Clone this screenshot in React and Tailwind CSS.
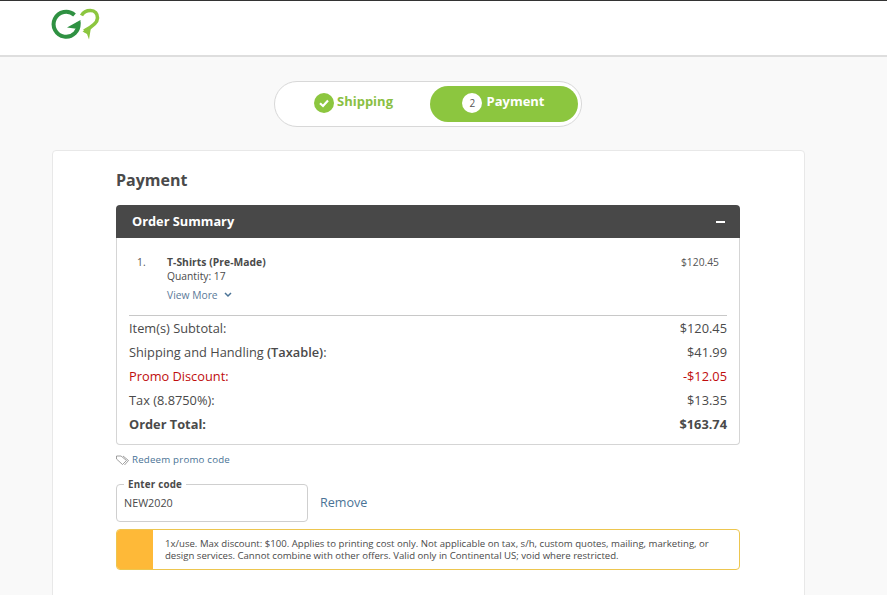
const Logo = () => (
  <svg width="50" height="34" viewBox="0 0 50 34" fill="none">
    <path d="M23.5 7 A12.5 12.5 0 1 0 27.5 14.5" stroke="#2f9142" strokeWidth="4" />
    <path d="M16 19.5 L29.5 12 L29.5 15 L27 21 Z" fill="#2f9142" />
    <path d="M30.5 7.5 C33 3 37 2.5 39.5 2.5 C44 2.5 46.5 6 46.5 10 C46.5 15 41 19 33 23" stroke="#8cc63f" strokeWidth="3.6" />
    <path d="M31.5 23.5 L40 19.5 L38 31.5 L36 26 Z" fill="#8cc63f" />
  </svg>
);

const Row = ({ label, value, className = '' }) => (
  <div className={`flex justify-between h-6 items-center ${className}`}>
    <span>{label}</span>
    <span>{value}</span>
  </div>
);

const App = () => {
  return (
    <div className="h-[595px] overflow-hidden bg-[#f9f9f9] font-['Open_Sans',sans-serif] text-[#4a4a4a]">
      <header className="h-[57px] bg-white border-t border-t-[#333] border-b-2 border-b-[#dedede] pl-[51px] pt-[7px]">
        <Logo />
      </header>

      <div className="pt-6 pl-[274px]">
        <div className="w-[308px] h-[46px] rounded-full bg-white border border-[#d8d8d8] flex items-center pl-[4px] pr-[3px]">
          <div className="w-[151px] flex items-center justify-center gap-[3px] pr-[2px] text-[13px] font-bold text-[#8ac044]">
            <span className="w-5 h-5 mt-[-2px] rounded-full bg-[#8cc63f] flex items-center justify-center">
              <svg width="12" height="12" viewBox="0 0 12 12" fill="none">
                <path d="M2 6.2 L5 9 L10 3.5" stroke="white" strokeWidth="2.2" />
              </svg>
            </span>
            <span className="mt-[-5px]">Shipping</span>
          </div>
          <div className="w-[148px] h-9 rounded-full bg-[#8cc63f] flex items-center justify-center gap-[4px] pr-[1px] text-[13px] font-bold text-white">
            <span className="w-5 h-5 mt-[-2px] rounded-full bg-white flex items-center justify-center text-[10px] font-normal text-[#555]">2</span>
            <span className="mt-[-5px]">Payment</span>
          </div>
        </div>
      </div>

      <main className="mt-[23px] ml-[52px] w-[753px] h-[500px] bg-white border border-[#e8e8e8] rounded-[4px] pl-[63px] pr-[64px] pt-[18px]">
        <h1 className="text-[16px] leading-[22px] font-bold">Payment</h1>

        <div className="mt-[14px] h-[33px] rounded-t-[4px] bg-[#484848] text-white flex items-center justify-between pl-4 pr-[15px]">
          <span className="text-[12.8px] font-bold">Order Summary</span>
          <span className="w-[9px] h-[2px] bg-white" />
        </div>
        <div className="h-[207px] bg-white border border-t-0 border-[#d5d5d5] rounded-b-[4px] px-3">
          <div className="flex h-[77px] pt-[17px] text-[10.3px] leading-[14px] pl-2 pr-[8px]">
            <span className="w-[30px] text-[#555]">1.</span>
            <div className="flex-1">
              <div className="font-bold tracking-[0.05px]">T-Shirts (Pre-Made)</div>
              <div>Quantity: 17</div>
              <div className="mt-[5px] flex items-center gap-[6px] text-[#5b7a99]">
                View More
                <svg width="8" height="6" viewBox="0 0 8 6" fill="none">
                  <path d="M1 1 L4 4 L7 1" stroke="#4a7396" strokeWidth="1.5" />
                </svg>
              </div>
            </div>
            <span className="text-[#555]">$120.45</span>
          </div>
          <div className="border-t border-[#c8c8c8] pt-[1px] text-[12.8px]">
            <Row label="Item(s) Subtotal:" value="$120.45" />
            <Row label={<>Shipping and Handling <b className="font-semibold">(Taxable)</b>:</>} value="$41.99" />
            <Row label="Promo Discount:" value="-$12.05" className="text-[#c00d0d]" />
            <Row label="Tax (8.8750%):" value="$13.35" />
            <Row label="Order Total:" value="$163.74" className="font-bold" />
          </div>
        </div>

        <div className="mt-2 flex items-center gap-[3px] text-[9.7px] text-[#4a7396] tracking-[0.2px]">
          <svg width="13" height="11" viewBox="0 0 13 11" fill="none" stroke="#888" strokeWidth="0.8">
            <path d="M0.5 1 H5 L10.5 5.5 L6.5 9.5 L0.5 4 Z" />
            <path d="M7 1 L12.5 5.5 L8.5 10" />
          </svg>
          Redeem promo code
        </div>

        <div className="mt-3 flex items-center">
          <fieldset className="w-[192px] h-[42px] border border-[#cfcfcf] rounded-[4px] pl-[7px]">
            <legend className="px-1 text-[9.8px] leading-[10px] font-bold tracking-[0.2px]">Enter code</legend>
            <div className="text-[10.8px] leading-[14px] pt-[6px]">NEW2020</div>
          </fieldset>
          <span className="ml-3 pt-[6px] text-[12.6px] text-[#4a7396]">Remove</span>
        </div>

        <div className="mt-[7px] h-[41px] flex rounded-[4px] border border-[#edc64f] overflow-hidden">
          <div className="w-[36px] bg-[#feb938]" />
          <p className="pl-[12px] pt-[8px] text-[9.6px] leading-[12px]">
            1x/use. Max discount: $100. Applies to printing cost only. Not applicable on tax, s/h, custom quotes, mailing, marketing, or
            <br />
            design services. Cannot combine with other offers. Valid only in Continental US; void where restricted.
          </p>
        </div>
      </main>
    </div>
  );
};

export default App;
